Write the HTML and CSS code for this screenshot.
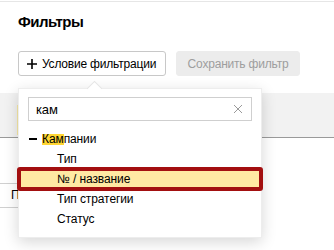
FILE: index.html
```html
<!DOCTYPE html>
<html lang="ru">
<head>
<meta charset="utf-8">
<link rel="stylesheet" href="styles.css">
</head>
<body>
<div class="page">
  <div class="topline"></div>
  <h1 class="title">Фильтры</h1>
  <div class="toolbar">
    <button class="btn btn-add">
      <svg class="plus" width="10" height="10" viewBox="0 0 10 10"><path d="M5 0v10M0 5h10" stroke="#000" stroke-width="1.6"/></svg>
      <span>Условие фильтрации</span>
    </button>
    <button class="btn btn-save">Сохранить фильтр</button>
  </div>
  <div class="band"><div class="band-item"></div></div>
  <div class="row-below">
    <div class="field">Поиск</div>
  </div>

  <div class="dropdown">
    <div class="caret"></div>
    <div class="search">
      <span class="search-text">кам</span>
      <svg class="clear" width="10" height="10" viewBox="0 0 10 10"><path d="M1 1l8 8M9 1l-8 8" stroke="#9a9a9a" stroke-width="1"/></svg>
    </div>
    <ul class="list">
      <li class="item group"><span class="dash"></span><span class="hl">Кам</span>пании</li>
      <li class="item sub">Тип</li>
      <li class="item sub selected">№ / название</li>
      <li class="item sub">Тип стратегии</li>
      <li class="item sub">Статус</li>
    </ul>
  </div>
</div>
</body>
</html>
```

FILE: styles.css
```css
* { box-sizing: border-box; }
html, body {
  margin: 0;
  padding: 0;
  background: #fff;
}
body {
  width: 334px;
  height: 250px;
  overflow: hidden;
  font-family: "Liberation Sans", Arial, sans-serif;
  color: #000;
  letter-spacing: -0.1px;
}
.page {
  position: relative;
  width: 334px;
  height: 250px;
}
.topline {
  height: 2px;
  border-bottom: 1px solid #e6e6e6;
}
.title {
  margin: 10px 0 0 18px;
  font-size: 15px;
  line-height: 20px;
  font-weight: bold;
  letter-spacing: -0.5px;
}
.toolbar {
  display: flex;
  gap: 10px;
  margin: 19px 0 0 18px;
}
.btn {
  height: 25px;
  margin: 0;
  font-family: "Liberation Sans", Arial, sans-serif;
  font-size: 12px;
  letter-spacing: -0.2px;
  border-radius: 3px;
  display: flex;
  align-items: center;
  padding: 0;
  white-space: nowrap;
}
.btn-add {
  width: 148px;
  background: #fff;
  border: 1px solid #c8c8c8;
  color: #000;
  padding-left: 8px;
  gap: 5px;
}
.plus { flex: none; }
.btn-save {
  width: 124px;
  background: #ececec;
  border: 1px solid #ececec;
  color: #9e9e9e;
  justify-content: center;
}
.band {
  margin-top: 17px;
  height: 45px;
  background: #f2f2f2;
  border-bottom: 1px solid #9a9a9a;
  padding: 12px 0 0 17px;
}
.band-item {
  width: 3px;
  height: 30px;
  background: #f7e9a6;
}
.row-below {
  margin-top: 45px;
}
.field {
  margin-left: -1px;
  width: 120px;
  height: 25px;
  border: 1px solid #d0d0d0;
  font-size: 12px;
  line-height: 23px;
  padding-left: 11px;
}
.dropdown {
  position: absolute;
  left: 18px;
  top: 88px;
  width: 244px;
  height: 150px;
  background: #fff;
  border: 1px solid rgba(0,0,0,0.07);
  box-shadow: 0 4px 14px rgba(0,0,0,0.16);
  padding: 8px 9px 0 9px;
}
.caret {
  position: absolute;
  left: 70px;
  top: -6px;
  width: 11px;
  height: 11px;
  background: #fff;
  transform: rotate(45deg);
  border-left: 1px solid rgba(0,0,0,0.1);
  border-top: 1px solid rgba(0,0,0,0.1);
}
.search {
  position: relative;
  height: 24px;
  border: 1px solid #cfcfcf;
  display: flex;
  align-items: center;
  justify-content: space-between;
  padding: 0 8px 0 7px;
  font-size: 13px;
  background: #fff;
}
.clear { display: block; }
.list {
  list-style: none;
  margin: 8px -9px 0 -9px;
  padding: 0;
}
.item {
  height: 20px;
  line-height: 20px;
  font-size: 12px;
  display: flex;
  align-items: center;
}
.group { padding-left: 10px; }
.sub { padding-left: 38px; }
.dash {
  width: 8px;
  height: 2px;
  background: #000;
  margin-right: 5px;
}
.hl {
  background: #ffd633;
  line-height: 11px;
  display: inline-block;
  height: 11px;
}
.selected {
  background: #ffe9a3;
  outline: 4px solid #a30f10;
  outline-offset: -2px;
  border-radius: 1px;
}
```
